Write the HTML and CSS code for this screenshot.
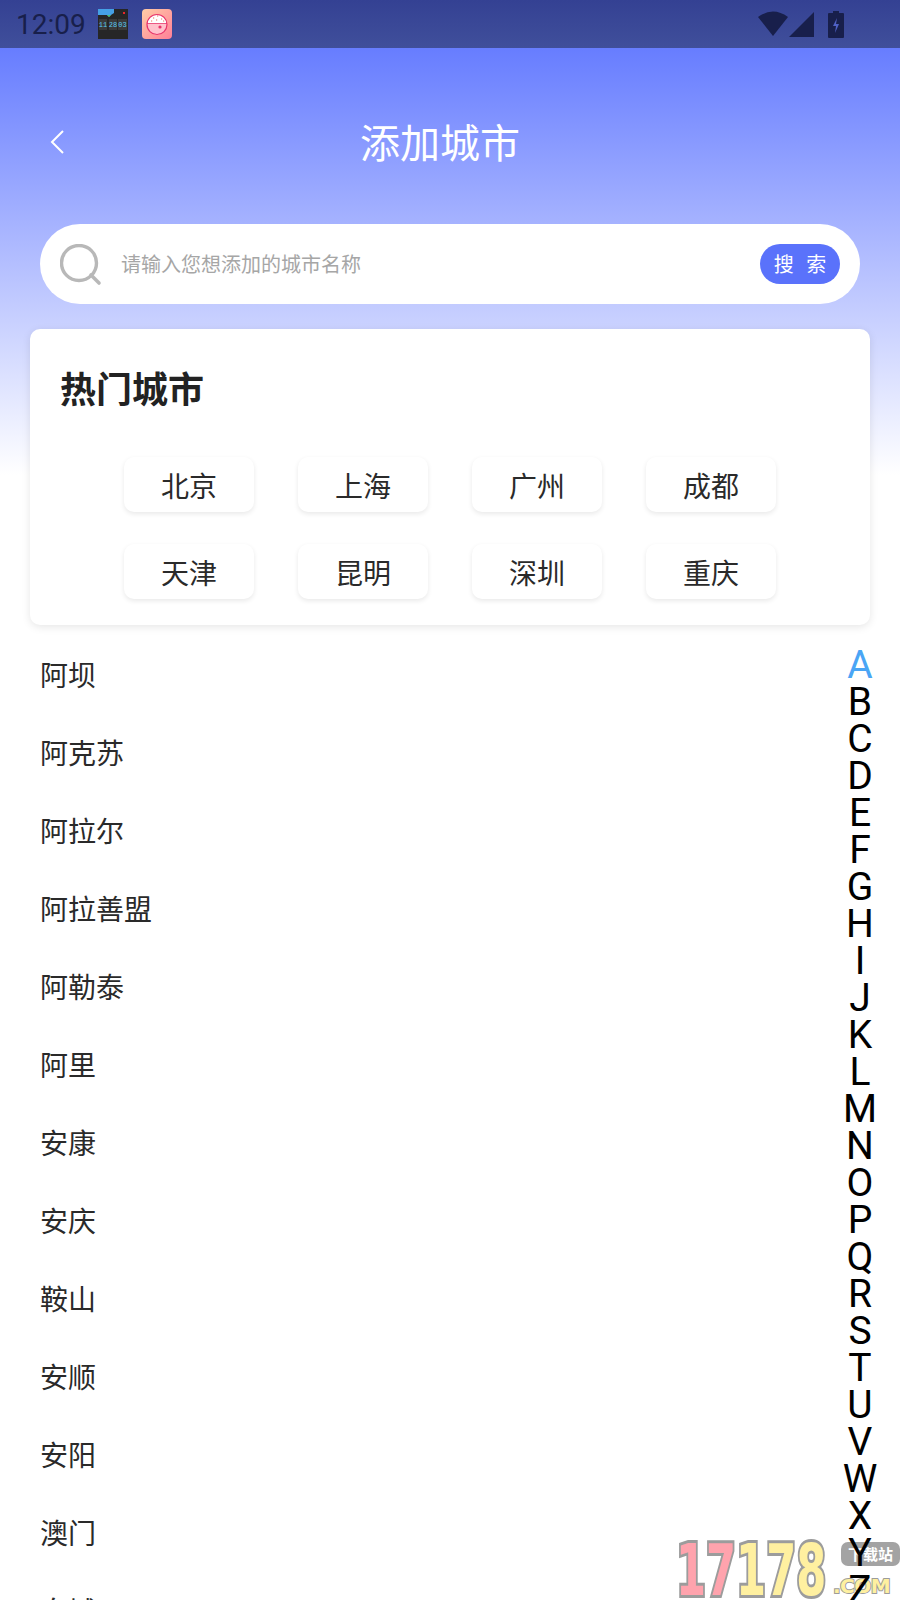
FILE: index.html
```html
<!DOCTYPE html>
<html lang="zh-CN">
<head>
    <meta charset="UTF-8">
    <meta name="viewport" content="width=device-width, initial-scale=1.0">
    <title>添加城市</title>
    <link rel="stylesheet" href="styles.css">
</head>
<body>
    <div class="page">
        <div class="status-bar">
            <span class="time">12:09</span>
            <svg class="app-icon" width="30" height="30" viewBox="0 0 30 30">
                <rect width="30" height="30" fill="#262626"/>
                <path d="M0 0h16v4l-3 2-2 2-2-2H0z" fill="#45a0e6"/>
                <path d="M9 6h4l-2 2z" fill="#4fc06a"/>
                <rect x="25" y="3" width="2" height="2" fill="#e8262a"/>
                <rect x="1" y="10" width="8" height="11" fill="#3a3a3a"/>
                <rect x="11" y="10" width="8" height="11" fill="#3a3a3a"/>
                <rect x="20" y="10" width="9" height="11" fill="#3a3a3a"/>
                <text class="clock-digits" x="5" y="18">11</text>
                <text class="clock-digits" x="15" y="18">28</text>
                <text class="clock-digits" x="24.5" y="18">03</text>
            </svg>
            <svg class="app-icon" width="30" height="30" viewBox="0 0 30 30">
                <defs>
                    <linearGradient id="riceBg" x1="0" y1="0" x2="1" y2="1">
                        <stop offset="0" stop-color="#ffcda6"/>
                        <stop offset="1" stop-color="#ff7f98"/>
                    </linearGradient>
                </defs>
                <rect width="30" height="30" rx="4" fill="url(#riceBg)"/>
                <circle cx="15" cy="15.5" r="10" fill="#fff"/>
                <path d="M5 14.5h20v2a10 9 0 0 1-20 0z" fill="#ffc1cc"/>
                <circle cx="15" cy="15.5" r="10" fill="none" stroke="#e8336b" stroke-width="1.2"/>
                <path d="M5 14.5h20" stroke="#e8336b" stroke-width="0.8"/>
                <path d="M11 9h1.2M15 7h1.2M19 10h1.2M14 11h1.2M9 12h1.2M21 12h1.2" stroke="#e8705f" stroke-width="1.2"/>
                <circle cx="18" cy="18" r="1.6" fill="#e8336b"/>
            </svg>
            <div class="status-right">
                <svg width="31" height="26" viewBox="0 0 31 26"><path d="M0 6Q15-5 30 6L15 25z" fill="#181f4b"/></svg>
                <svg width="25" height="25" viewBox="0 0 25 25"><path d="M25 0v25H0z" fill="#181f4b"/></svg>
                <svg class="battery" width="16" height="27" viewBox="0 0 16 27">
                    <path d="M5 0h6v2h4a1 1 0 0 1 1 1v23a1 1 0 0 1-1 1H1a1 1 0 0 1-1-1V3a1 1 0 0 1 1-1h4z" fill="#181f4b"/>
                    <path d="M9 7l-4 8h3l-1 7 4-9H8z" fill="#4f60c4"/>
                </svg>
            </div>
        </div>

        <div class="top-area">
            <header class="title-bar">
                <svg class="back" width="16" height="26" viewBox="0 0 16 26"><path d="M14 2L3 13l11 11" fill="none" stroke="#fff" stroke-width="2"/></svg>
                <h1 class="title">添加城市</h1>
            </header>

            <div class="search">
                <svg class="search-icon" width="42" height="42" viewBox="0 0 42 42">
                    <circle cx="19" cy="19" r="17.5" fill="none" stroke="#b8b8b8" stroke-width="3.4"/>
                    <path d="M31 31l8 8" stroke="#b8b8b8" stroke-width="3.6" stroke-linecap="round"/>
                </svg>
                <span class="placeholder">请输入您想添加的城市名称</span>
                <button class="search-btn">搜 索</button>
            </div>

            <section class="hot-card">
                <h2 class="hot-title">热门城市</h2>
                <div class="hot-grid">
                    <a class="hot-city">北京</a>
                    <a class="hot-city">上海</a>
                    <a class="hot-city">广州</a>
                    <a class="hot-city">成都</a>
                    <a class="hot-city">天津</a>
                    <a class="hot-city">昆明</a>
                    <a class="hot-city">深圳</a>
                    <a class="hot-city">重庆</a>
                </div>
            </section>
        </div>

        <ul class="city-list">
            <li>阿坝</li>
            <li>阿克苏</li>
            <li>阿拉尔</li>
            <li>阿拉善盟</li>
            <li>阿勒泰</li>
            <li>阿里</li>
            <li>安康</li>
            <li>安庆</li>
            <li>鞍山</li>
            <li>安顺</li>
            <li>安阳</li>
            <li>澳门</li>
            <li>白城</li>
        </ul>

        <div class="watermark">
            <span class="wm-num"><span class="wm-pink">17</span><span class="wm-yellow">178</span></span>
            <span class="wm-tag">下载站</span>
            <span class="wm-com">.COM</span>
        </div>

        <div class="letters">
            <span class="active">A</span><span>B</span><span>C</span><span>D</span><span>E</span><span>F</span><span>G</span><span>H</span><span>I</span><span>J</span><span>K</span><span>L</span><span>M</span><span>N</span><span>O</span><span>P</span><span>Q</span><span>R</span><span>S</span><span>T</span><span>U</span><span>V</span><span>W</span><span>X</span><span>Y</span><span>Z</span>
        </div>
    </div>
</body>
</html>
```

FILE: styles.css
```css
body, html {
    margin: 0;
    padding: 0;
    font-family: "Noto Sans CJK SC", Roboto, sans-serif;
    background-color: #fff;
}
.page {
    position: relative;
    width: 900px;
    height: 1600px;
    overflow: hidden;
}
.status-bar {
    height: 48px;
    display: flex;
    align-items: center;
    padding-left: 16px;
    box-sizing: border-box;
    background: linear-gradient(#344193, #404f9b);
}
.time {
    font-family: Roboto, sans-serif;
    font-size: 28px;
    color: #181f4b;
    margin-right: 12px;
}
.app-icon {
    margin-right: 14px;
}
.clock-digits {
    font-family: "Liberation Mono", monospace;
    font-size: 7px;
    fill: #58c8f2;
    text-anchor: middle;
}
.status-right {
    margin-left: auto;
    margin-right: 56px;
    display: flex;
    align-items: center;
}
.battery {
    margin-left: 14px;
}
.top-area {
    height: 427px;
    padding-top: 1px;
    box-sizing: border-box;
    background: linear-gradient(#677dff, #ffffff);
}
.title-bar {
    position: relative;
    height: 175px;
    display: flex;
    align-items: center;
    justify-content: center;
}
.back {
    position: absolute;
    left: 49px;
    top: 80px;
}
.title {
    margin: 0 0 0 -20px;
    font-size: 40px;
    font-weight: 400;
    color: #fff;
    padding-top: 8px;
}
.search {
    margin: 0 40px;
    height: 80px;
    border-radius: 40px;
    background-color: #fff;
    display: flex;
    align-items: center;
    padding: 0 20px;
}
.search-icon {
    margin-right: 19px;
    margin-top: 1px;
}
.placeholder {
    font-size: 20px;
    color: #a6a6a6;
    padding-bottom: 2px;
}
.search-btn {
    margin-left: auto;
    width: 80px;
    height: 40px;
    border: none;
    border-radius: 20px;
    background-color: #5a72fb;
    color: #fff;
    font-family: inherit;
    font-size: 20px;
    word-spacing: 8px;
    padding: 0 0 2px;
}
.hot-card {
    margin: 25px 30px 0;
    height: 296px;
    box-sizing: border-box;
    padding: 32px 30px 0;
    border-radius: 10px;
    background-color: #fff;
    box-shadow: 0 2px 8px rgba(0, 0, 0, 0.1);
}
.hot-title {
    margin: 0;
    font-size: 36px;
    line-height: 52px;
    font-weight: 700;
    color: #222;
}
.hot-grid {
    margin-top: 44px;
    margin-left: 64px;
    display: grid;
    grid-template-columns: repeat(4, 130px);
    column-gap: 44px;
    row-gap: 32px;
}
.hot-city {
    height: 55px;
    line-height: 57px;
    text-align: center;
    font-size: 28px;
    color: #2a2a2a;
    background-color: #fff;
    border-radius: 10px;
    box-shadow: 0 2px 5px rgba(0, 0, 0, 0.09);
}
.city-list {
    list-style: none;
    margin: 160px 0 0;
    padding: 0 0 0 40px;
}
.city-list li {
    height: 78px;
    line-height: 78px;
    font-size: 28px;
    color: #2a2a2a;
}
.letters {
    position: absolute;
    top: 647px;
    right: 22px;
    width: 36px;
    display: flex;
    flex-direction: column;
    align-items: center;
    font-family: Roboto, sans-serif;
    font-size: 39px;
    line-height: 37px;
    color: #000;
}
.letters .active {
    color: #4aa5f5;
}
.watermark {
    position: absolute;
    left: 676px;
    top: 1540px;
    width: 224px;
    height: 60px;
}
.wm-num {
    display: inline-block;
    font-family: "DejaVu Sans", sans-serif;
    font-size: 72px;
    line-height: 60px;
    font-weight: 700;
    white-space: nowrap;
    transform: scaleX(0.6);
    transform-origin: left top;
    -webkit-text-stroke: 6px #9c9c9c;
    paint-order: stroke fill;
}
.wm-pink {
    color: #ffa3ad;
}
.wm-yellow {
    color: #fff0a0;
}
.wm-tag {
    position: absolute;
    left: 165px;
    top: 2px;
    width: 59px;
    text-align: center;
    font-size: 15px;
    line-height: 24px;
    font-weight: 700;
    color: #fff;
    background-color: #a3a3a3;
    border-radius: 7px;
}
.wm-com {
    position: absolute;
    left: 157px;
    top: 33px;
    font-family: "DejaVu Sans", sans-serif;
    font-size: 20px;
    line-height: 26px;
    font-weight: 700;
    color: #fff0a0;
    letter-spacing: -0.5px;
    -webkit-text-stroke: 2px #9c9c9c;
    paint-order: stroke fill;
}
```
